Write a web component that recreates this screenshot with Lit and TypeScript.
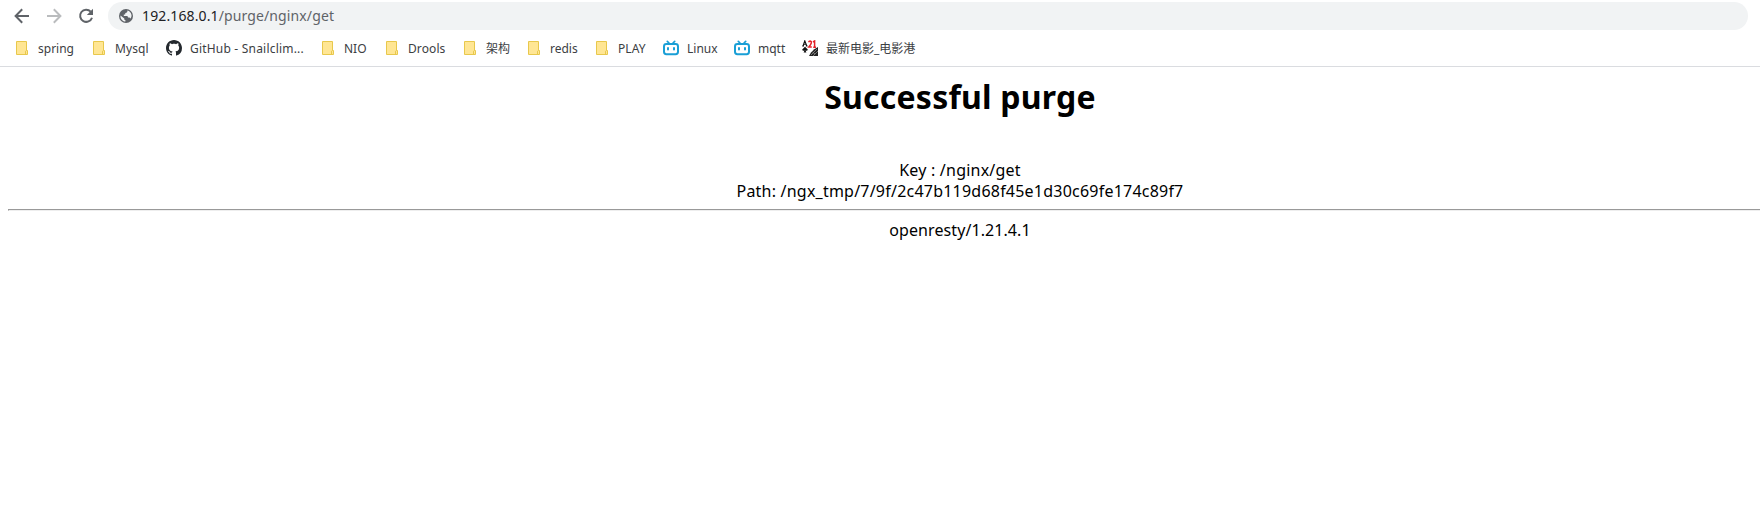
import { LitElement, html, css, svg } from "lit";
import { customElement } from "lit/decorators.js";

const folder = svg`<svg width="16" height="16" viewBox="0 0 16 16"><path d="M2.5 1.5H12.5V10.5H13.5V14.5H2.5Z" fill="#ffe694" stroke="#e8c84c"/><path d="M11.5 14V11.2L12.5 10.4" fill="none" stroke="#e8c84c"/></svg>`;
const github = svg`<svg width="16" height="16" viewBox="0 0 16 16"><path fill="#24292e" d="M8 0C3.58 0 0 3.58 0 8c0 3.54 2.29 6.53 5.47 7.59.4.07.55-.17.55-.38 0-.19-.01-.82-.01-1.49-2.01.37-2.53-.49-2.69-.94-.09-.23-.48-.94-.82-1.13-.28-.15-.68-.52-.01-.53.63-.01 1.08.58 1.23.82.72 1.21 1.87.87 2.33.66.07-.52.28-.87.51-1.07-1.78-.2-3.64-.89-3.64-3.95 0-.87.31-1.59.82-2.15-.08-.2-.36-1.02.08-2.12 0 0 .67-.21 2.2.82.64-.18 1.32-.27 2-.27s1.36.09 2 .27c1.53-1.04 2.2-.82 2.2-.82.44 1.1.16 1.92.08 2.12.51.56.82 1.27.82 2.15 0 3.07-1.87 3.75-3.65 3.95.29.25.54.73.54 1.48 0 1.07-.01 1.93-.01 2.2 0 .21.15.46.55.38A8.01 8.01 0 0 0 16 8c0-4.42-3.58-8-8-8z"/></svg>`;
const tv = svg`<svg width="16" height="16" viewBox="0 0 16 16" fill="none" stroke="#1a9fd6" stroke-linecap="round"><rect x="1" y="4" width="14" height="10.2" rx="2.4" stroke-width="2"/><path d="M4.3 1.3L6 3M11.7 1.3L10 3" stroke-width="1.7"/><path d="M5 8v1.5M11 8v1.5" stroke-width="2"/></svg>`;
const cards = svg`<svg width="16" height="16" viewBox="0 0 16 16"><g fill="none"><path d="M1 6L2.8 .8L4.8 6M1.6 4.2H4M.2 6H2M3.8 6H5.6" stroke="#111" stroke-width="1.1"/><path d="M6.6 2.2Q7 .8 8.2 .9Q9.8 1.2 9.2 3.2Q8.8 4.6 6.8 7H9.8M11 2L12.6 1V7.4M11.2 7.2H14" stroke="#e52228" stroke-width="1.5"/></g><path d="M3 6.7L5.8 9.6Q5.4 11.4 3.5 10.6L4.4 12.4H1.6L2.5 10.6Q.4 11.3.2 9.6Z" fill="#111"/><path d="M16 7V16H7L9 12.5L12.3 9.2Z" fill="#222"/><path d="M9 15L15 9M11 16L16 11M10.5 12L13 14" stroke="#aaa" stroke-width=".6"/></svg>`;

const bookmarks = [
  { label: "spring", icon: folder, w: 77, ls: 0 },
  { label: "Mysql", icon: folder, w: 75, ls: 0.1 },
  { label: "GitHub - Snailclim...", icon: github, w: 154, ls: 0.2 },
  { label: "NIO", icon: folder, w: 64, ls: 0 },
  { label: "Drools", icon: folder, w: 78, ls: 0.1 },
  { label: "架构", icon: folder, w: 64, ls: 0 },
  { label: "redis", icon: folder, w: 68, ls: 0 },
  { label: "PLAY", icon: folder, w: 69, ls: 0.1 },
  { label: "Linux", icon: tv, w: 71, ls: 0 },
  { label: "mqtt", icon: tv, w: 68, ls: 0 },
  { label: "最新电影_电影港", icon: cards, w: 130, ls: 0 },
];

@customElement("app-root")
export class AppRoot extends LitElement {
  static styles = css`
    :host { display: block; height: 526px; overflow: hidden; background: #fff; color: #000;
      font-family: "Noto Sans", "Noto Sans CJK SC", sans-serif; }
    svg { display: block; flex: none; }
    .toolbar { display: flex; height: 28px; padding: 2px 12px 0 14px; align-items: center; }
    .nav { display: flex; gap: 16px; width: 94px; flex: none; }
    .omnibox { flex: 1; height: 28px; border-radius: 14px; background: #f1f3f4; display: flex;
      align-items: center; padding-left: 11px; gap: 9px; }
    .url { font-size: 14px; line-height: 28px; color: #5f6368; letter-spacing: 0.12px; white-space: pre; }
    .host { color: #202124; }
    .bookmarks { display: flex; height: 36px; padding-left: 14px; border-bottom: 1px solid #dadce0; align-items: center; }
    .bookmark { display: flex; align-items: center; gap: 8px; flex: none; font-size: 12px;
      line-height: 18px; color: #3c4043; white-space: nowrap; }
    .label { padding-top: 2px; }
    .page { width: 1904px; margin-left: 8px; text-align: center; font-size: 16px; line-height: 21px; }
    .title { margin: 0; padding-top: 8px; font-size: 32px; line-height: 43px; font-weight: 700; letter-spacing: 0.22px; }
    .details { padding-top: 42px; letter-spacing: 0.22px; }
    .rule { margin: 7px 0 9px; border: 1px solid; border-color: #999 #eee #eee #999; }
    .server { letter-spacing: 0.08px; }
  `;

  render() {
    return html`
      <div class="toolbar">
        <div class="nav">
          <svg width="16" height="16" viewBox="0 0 16 16" fill="none" stroke="#5f6368" stroke-width="2"><path d="M15 8H2.5M8.2 1.3L1.6 8L8.2 14.7"/></svg>
          <svg width="16" height="16" viewBox="0 0 16 16" fill="none" stroke="#babcbe" stroke-width="2"><path d="M1 8H13.5M7.8 1.3L14.4 8L7.8 14.7"/></svg>
          <svg width="16" height="16" viewBox="0 0 16 16"><path d="M12.7 3.6A6.1 6.1 0 1 0 14 9.7" fill="none" stroke="#5f6368" stroke-width="2"/><path d="M15 .8V7H8.8Z" fill="#5f6368"/></svg>
        </div>
        <div class="omnibox">
          <svg width="14" height="14" viewBox="0 0 14 14"><circle cx="7" cy="7" r="7" fill="#5f6368"/><path d="M8.4 1.6C8.6 3.3 7.9 3.9 6.3 4L6.2 5.4H4.8V6.9H8.4L9.1 8.5H10.6L11.2 9.6C12.2 8.8 12.7 7.5 12.5 6C12 3.7 10.5 2.1 8.4 1.6ZM1.5 6.4L5.3 9.6V10.7L6.4 11V12.5C3.2 12.2 1.1 9.4 1.5 6.4Z" fill="#f1f3f4"/></svg>
          <div class="url"><span class="host">192.168.0.1</span>/purge/nginx/get</div>
        </div>
      </div>
      <div class="bookmarks">
        ${bookmarks.map((b) => html`<div class="bookmark" style="width:${b.w}px;letter-spacing:${b.ls}px">${b.icon}<span class="label">${b.label}</span></div>`)}
      </div>
      <div class="page">
        <h1 class="title">Successful purge</h1>
        <div class="details">
          <div>Key : /nginx/get</div>
          <div>Path: /ngx_tmp/7/9f/2c47b119d68f45e1d30c69fe174c89f7</div>
        </div>
        <hr class="rule" />
        <div class="server">openresty/1.21.4.1</div>
      </div>
    `;
  }
}
